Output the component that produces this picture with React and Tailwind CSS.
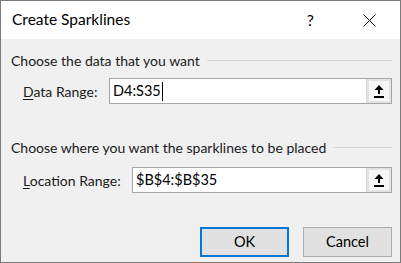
import React from "react";

const font = "font-['Segoe_UI','Lato',sans-serif]";

const PickerButton = () => (
  <div className="flex h-full w-[25px] items-center justify-center border-l border-[#dadada] bg-[#e3e3e3] p-[2px]">
    <div className="flex h-full w-full items-center justify-center bg-[#f7f7f7]">
      <svg width="10" height="13" viewBox="0 0 10 13">
        <path d="M5 0 L9.5 5 L6 5 L6 9 L4 9 L4 5 L0.5 5 Z" fill="#000" />
        <rect x="0" y="11" width="10" height="2" fill="#000" />
      </svg>
    </div>
  </div>
);

const RangeField = ({ value, caret }) => (
  <div className="flex h-[26px] flex-1 items-stretch border border-[#a6a6a6] bg-white">
    <div className="flex flex-1 items-center pl-[3px] text-[14.5px] text-black">
      <span>{value}</span>
      {caret && <span className="ml-[1px] h-[19px] w-px bg-black" />}
    </div>
    <PickerButton />
  </div>
);

const SectionHeader = ({ children }) => (
  <div className="flex h-[20px] items-center pl-[10px] pr-[8px]">
    <span className="shrink-0 whitespace-nowrap text-[14px] text-[#1a1a1a]">{children}</span>
    <div className="ml-[7px] h-px flex-1 bg-[#d9d9d9]" />
  </div>
);

export default function App() {
  return (
    <div
      className={`${font} flex h-[263px] w-[401px] flex-col overflow-hidden border border-[#7a7a7a] bg-[#f0f0f0]`}
    >
      <header className="flex h-[38px] shrink-0 items-center bg-white pl-[11px]">
        <span className="text-[15.5px] text-black">Create Sparklines</span>
        <span className="ml-auto text-[16px] text-black">?</span>
        <svg className="ml-[49px] mr-[24px]" width="13" height="13" viewBox="0 0 13 13">
          <path d="M0.5 0.5 L12.5 12.5 M12.5 0.5 L0.5 12.5" stroke="#000" strokeWidth="1" />
        </svg>
      </header>

      <div className="mt-[11px]">
        <SectionHeader>Choose the data that you want</SectionHeader>
      </div>
      <div className="mt-[8px] flex items-center pr-[8px]">
        <span className="w-[108px] shrink-0 whitespace-nowrap pl-[22px] text-[14px] text-[#1a1a1a]">
          <span className="underline underline-offset-2">D</span>ata Range:
        </span>
        <RangeField value="D4:S35" caret />
      </div>

      <div className="mt-[33px]">
        <SectionHeader>Choose where you want the sparklines to be placed</SectionHeader>
      </div>
      <div className="mt-[10px] flex items-center pr-[8px]">
        <span className="w-[131px] shrink-0 whitespace-nowrap pl-[22px] text-[14px] text-[#1a1a1a]">
          <span className="underline underline-offset-2">L</span>ocation Range:
        </span>
        <RangeField value="$B$4:$B$35" />
      </div>

      <div className="mt-[34px] flex justify-end gap-[14px] pr-[8px]">
        <button className="h-[30px] w-[89px] border-2 border-[#0078d7] bg-[#e1e1e1] text-[14.5px] text-black">
          OK
        </button>
        <button className="h-[30px] w-[89px] border border-[#adadad] bg-[#e1e1e1] text-[14.5px] text-black">
          Cancel
        </button>
      </div>
    </div>
  );
}
